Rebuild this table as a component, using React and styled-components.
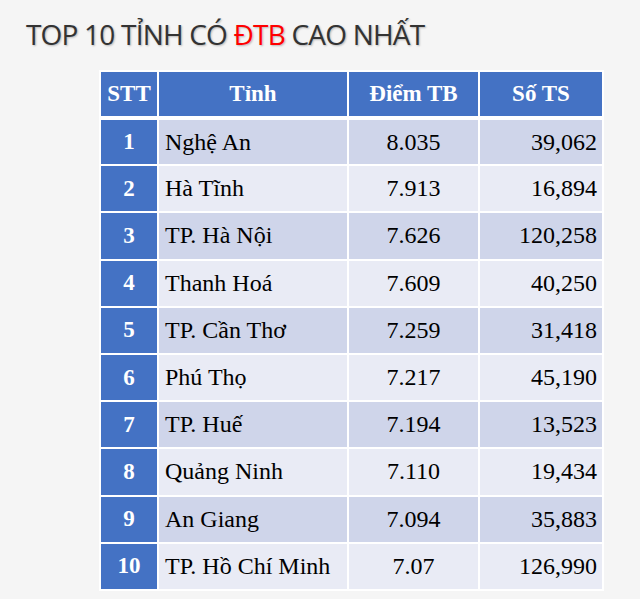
import styled, { createGlobalStyle } from "styled-components";

const rows = [
  { stt: 1, name: "Nghệ An", score: "8.035", count: "39,062" },
  { stt: 2, name: "Hà Tĩnh", score: "7.913", count: "16,894" },
  { stt: 3, name: "TP. Hà Nội", score: "7.626", count: "120,258" },
  { stt: 4, name: "Thanh Hoá", score: "7.609", count: "40,250" },
  { stt: 5, name: "TP. Cần Thơ", score: "7.259", count: "31,418" },
  { stt: 6, name: "Phú Thọ", score: "7.217", count: "45,190" },
  { stt: 7, name: "TP. Huế", score: "7.194", count: "13,523" },
  { stt: 8, name: "Quảng Ninh", score: "7.110", count: "19,434" },
  { stt: 9, name: "An Giang", score: "7.094", count: "35,883" },
  { stt: 10, name: "TP. Hồ Chí Minh", score: "7.07", count: "126,990" },
];

const GlobalStyle = createGlobalStyle`
  html, body {
    margin: 0;
    padding: 0;
    background: #f5f5f5;
  }
`;

const App = () => (
  <>
    <GlobalStyle />
    <Page>
      <Title>
        TOP 10 TỈNH CÓ <Red>ĐTB</Red> CAO NHẤT
      </Title>
      <Table>
        <thead>
          <tr>
            <HeadCell $w={56}>STT</HeadCell>
            <HeadCell $w={188}>Tỉnh</HeadCell>
            <HeadCell $w={129}>Điểm TB</HeadCell>
            <HeadCell $w={122}>Số TS</HeadCell>
          </tr>
        </thead>
        <tbody>
          {rows.map((r) => (
            <Row key={r.stt} $odd={r.stt % 2 === 1}>
              <SttCell>{r.stt}</SttCell>
              <NameCell>{r.name}</NameCell>
              <ScoreCell>{r.score}</ScoreCell>
              <CountCell>{r.count}</CountCell>
            </Row>
          ))}
        </tbody>
      </Table>
    </Page>
  </>
);

const serif = `"Liberation Serif", "Times New Roman", serif`;

const Page = styled.div`
  width: 640px;
  height: 599px;
  padding: 15px 0 0 26px;
  box-sizing: border-box;
`;

const Title = styled.h1`
  margin: 0 0 17px 0;
  font-family: "Open Sans", "Noto Sans", sans-serif;
  font-weight: 400;
  font-size: 28px;
  line-height: 38px;
  letter-spacing: -0.8px;
  color: #333333;
  text-shadow: 1px 1px 2px rgba(0, 0, 0, 0.25);
`;

const Red = styled.span`
  color: #ff0000;
`;

const Table = styled.table`
  margin-left: 73px;
  border-collapse: collapse;
`;

const Cell = styled.td`
  border: 2px solid #ffffff;
  padding: 0;
  font-family: ${serif};
  font-size: 24px;
  color: #000000;
`;

const HeadCell = styled(Cell).attrs({ as: "th" })`
  width: ${(p) => p.$w}px;
  height: 44px;
  background: #4472c4;
  color: #ffffff;
  font-size: 23px;
  font-weight: 700;
  text-align: center;
  border-bottom-width: 4px;
`;

const Row = styled.tr`
  height: 47.2px;
  background: ${(p) => (p.$odd ? "#cfd5ea" : "#e9ebf5")};
`;

const SttCell = styled(Cell)`
  background: #4472c4;
  color: #ffffff;
  font-size: 23px;
  font-weight: 700;
  text-align: center;
`;

const NameCell = styled(Cell)`
  padding-left: 6px;
  text-align: left;
`;

const ScoreCell = styled(Cell)`
  text-align: center;
`;

const CountCell = styled(Cell)`
  padding-right: 5px;
  text-align: right;
`;

export default App;
